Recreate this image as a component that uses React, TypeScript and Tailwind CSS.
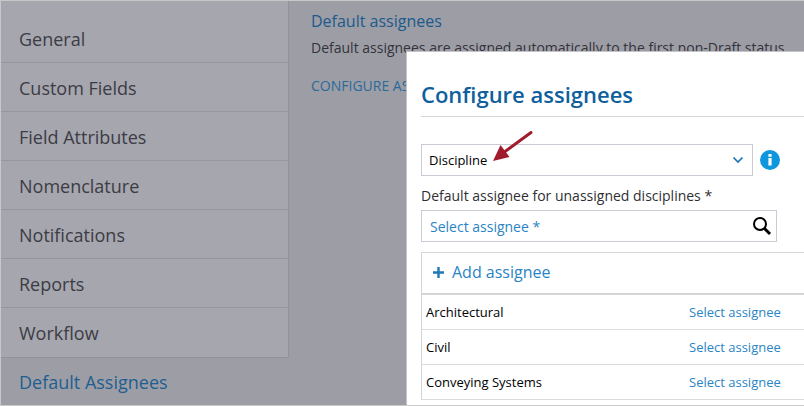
const NAV_ITEMS = ['General', 'Custom Fields', 'Field Attributes', 'Nomenclature', 'Notifications', 'Reports', 'Workflow']
const DISCIPLINES = ['Architectural', 'Civil', 'Conveying Systems']

function Sidebar() {
  return (
    <div className="w-[288px] shrink-0">
      <ul className="bg-[#a6a6af] border-r border-b border-[#92929b] pt-[14px]">
        {NAV_ITEMS.map((item, i) => (
          <li
            key={item}
            className={`flex items-center pl-[18px] pt-[2px] text-[18px] text-[#3c3c44] ${
              i === 0 ? 'h-[48px]' : 'h-[49px]'
            } ${i < NAV_ITEMS.length - 1 ? 'border-b border-[#9696a0]' : ''}`}
          >
            {item}
          </li>
        ))}
      </ul>
      <div className="h-[49px] pl-[18px] flex items-center text-[18px] text-[#1f5f8f]">Default Assignees</div>
    </div>
  )
}

function ConfigureModal() {
  return (
    <div className="absolute left-[405px] top-[50px] right-0 bottom-0 bg-white border-l border-t border-[#c4c4c8] overflow-hidden">
      <div className="ml-[14px] h-[65px] border-b border-[#d5d5d8] pt-[23px]">
        <h2 className="text-[22px] leading-[38px] font-semibold text-[#0f5f9c]">Configure assignees</h2>
      </div>

      <div className="ml-[14px] mt-[27px] flex items-center gap-[7px]">
        <div className="relative w-[332px] h-[32px] border border-[#c9ccd4] flex items-center justify-between pl-[7px] pr-[8px] text-[13px] text-black">
          <span className="pt-[2px]">Discipline</span>
          <svg width="12" height="8" viewBox="0 0 12 8" className="text-[#1f74b4]">
            <path d="M1.5 1.5 6 6l4.5-4.5" fill="none" stroke="currentColor" strokeWidth="1.7" />
          </svg>
          <svg width="44" height="34" viewBox="0 0 44 34" className="absolute left-[70px] top-[-16px]">
            <path d="M39 3.5 11 24" stroke="#a01c2c" strokeWidth="3" strokeLinecap="round" fill="none" />
            <path d="M1 32 17.5 28 8.5 16z" fill="#a01c2c" />
          </svg>
        </div>
        <svg width="20" height="20" viewBox="0 0 20 20">
          <circle cx="10" cy="10" r="10" fill="#0e97dc" />
          <rect x="8.4" y="8" width="3.2" height="7.5" fill="#fff" />
          <rect x="8.4" y="4" width="3.2" height="2.8" fill="#fff" />
        </svg>
      </div>

      <div className="ml-[14px] mt-[10px] text-[14px] leading-[20px] text-[#2f2f33]">
        Default assignee for unassigned disciplines *
      </div>

      <div className="ml-[14px] mt-[4px] w-[356px] h-[32px] border border-[#c9ccd4] flex items-center justify-between pl-[8px] pr-[4px]">
        <span className="text-[14px] text-[#2a84c4]">Select assignee *</span>
        <svg width="20" height="20" viewBox="0 0 20 20" fill="none" stroke="#000">
          <circle cx="8" cy="8" r="6" strokeWidth="2" />
          <path d="M12.5 12.5 18 18" strokeWidth="3" />
        </svg>
      </div>

      <div className="ml-[14px] mt-[10px] border-l border-[#d5d5d8]">
        <div className="h-[43px] pb-[2px] border-t border-b-2 border-[#d5d5d8] flex items-center pl-[10px] gap-[7px] text-[16px] text-[#2a84c4]">
          <svg width="13" height="13" viewBox="0 0 13 13">
            <path d="M6.5 1v11M1 6.5h11" stroke="#1f78b8" strokeWidth="2.4" fill="none" />
          </svg>
          Add assignee
        </div>
        {DISCIPLINES.map((name) => (
          <div key={name} className="h-[35px] pt-[2px] border-b border-[#dcdcdf] flex items-center pl-[4px] text-[13px] text-black">
            <span className="w-[263px]">{name}</span>
            <span className="text-[#2a84c4]">Select assignee</span>
          </div>
        ))}
      </div>
    </div>
  )
}

export default function App() {
  return (
    <div className="relative w-[804px] h-[406px] overflow-hidden bg-[#9d9da6] border-t border-l border-b border-[#c8c8c8] font-['Open_Sans',sans-serif]">
      <div className="flex h-full">
        <Sidebar />
        <div className="pl-[22px] pt-[9px] whitespace-nowrap">
          <div className="text-[16px] leading-[22px] text-[#1a5a8c]">Default assignees</div>
          <div className="mt-[6px] text-[14px] leading-[20px] text-[#33333a]">
            Default assignees are assigned automatically to the first non-Draft status
          </div>
          <div className="mt-[18px] text-[14px] leading-[20px] text-[#2a6a9a]">CONFIGURE ASSIGNEES</div>
        </div>
      </div>
      <ConfigureModal />
    </div>
  )
}
